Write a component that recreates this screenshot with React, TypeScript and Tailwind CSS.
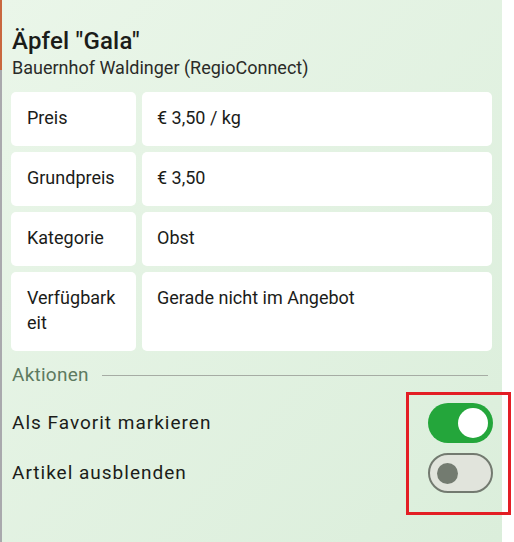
import React from "react";

const rows: [React.ReactNode, string][] = [
  ["Preis", "€ 3,50 / kg"],
  ["Grundpreis", "€ 3,50"],
  ["Kategorie", "Obst"],
  [
    <>
      Verfügbark<wbr />eit
    </>,
    "Gerade nicht im Angebot",
  ],
];

export default function App() {
  return (
    <div
      className="relative flex w-[514px] h-[542px] bg-white overflow-hidden text-[#1b1c19]"
      style={{ fontFamily: "Roboto, 'Noto Sans', sans-serif" }}
    >
      <div className="w-[2px] flex flex-col">
        <div className="h-[70px] bg-[#c9683f]" />
        <div className="flex-1 bg-[#a9a9ad]" />
      </div>
      <div className="w-[500px] bg-gradient-to-br from-[#eaf6e9] to-[#dbeedb] px-[9px] pt-[26px]">
        <div className="pl-[1px]">
          <h1 className="text-[24px] leading-[30px] font-medium tracking-[0.2px]">Äpfel "Gala"</h1>
          <p className="text-[18px] leading-[24px] text-[#2a2b28]">Bauernhof Waldinger (RegioConnect)</p>
        </div>
        <div className="mt-[12px] grid grid-cols-[125px_350px] gap-[6px]">
          {rows.map(([k, v], i) => (
            <React.Fragment key={i}>
              <div className="bg-white rounded-[5px] px-4 pt-[13px] pb-[16px] text-[18px] leading-[25px]">{k}</div>
              <div className="bg-white rounded-[5px] px-[15px] pt-[13px] pb-[16px] text-[18px] leading-[25px]">{v}</div>
            </React.Fragment>
          ))}
        </div>
        <div className="mt-[12px] flex items-center gap-[13px] pl-[1px] pr-[5px]">
          <span className="text-[19px] leading-6 tracking-[0.25px] text-[#5d7a5f]">Aktionen</span>
          <div className="flex-1 h-px bg-[#a6aca4]" />
        </div>
        <div className="mt-[16px] flex flex-col gap-[10px] pl-[1px]">
          <div className="flex items-center justify-between h-[40px]">
            <span className="text-[19px] tracking-[1px]">Als Favorit markieren</span>
            <div className="w-[65px] h-[40px] rounded-full bg-[#24a63b] flex items-center justify-end pr-[5px]">
              <div className="w-[30px] h-[30px] rounded-full bg-white" />
            </div>
          </div>
          <div className="flex items-center justify-between h-[40px]">
            <span className="text-[19px] tracking-[1px]">Artikel ausblenden</span>
            <div className="w-[65px] h-[40px] rounded-full bg-[#e1e4dc] border-[2.5px] border-[#737a70] flex items-center pl-[7px]">
              <div className="w-[21px] h-[21px] rounded-full bg-[#737b70]" />
            </div>
          </div>
        </div>
      </div>
      <div className="absolute left-[406px] top-[392px] w-[105px] h-[123px] border-[3px] border-[#e31e24]" />
    </div>
  );
}
